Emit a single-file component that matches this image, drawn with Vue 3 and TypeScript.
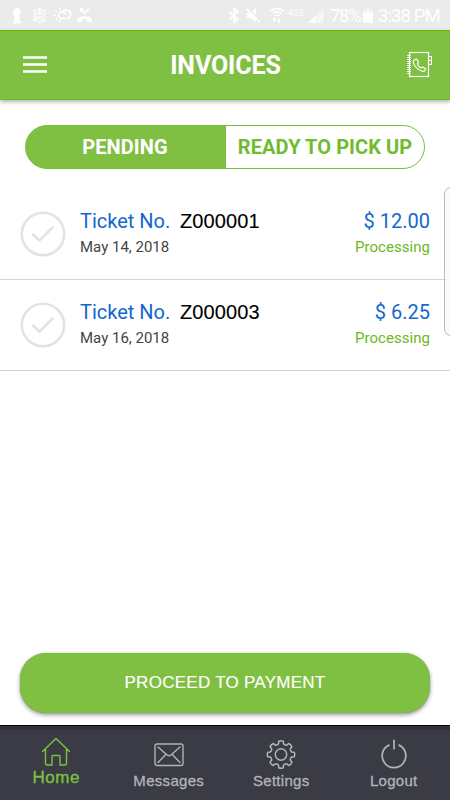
<script setup lang="ts">
interface Ticket { no: string; date: string; amount: string; status: string }

const tickets: Ticket[] = [
  { no: 'Z000001', date: 'May 14, 2018', amount: '$ 12.00', status: 'Processing' },
  { no: 'Z000003', date: 'May 16, 2018', amount: '$ 6.25', status: 'Processing' },
]

// Outline of the eight-toothed settings gear, centred on 15,15
function gearPath(): string {
  const at = (r: number, deg: number): string => {
    const a = (deg * Math.PI) / 180
    return `${(15 + r * Math.cos(a)).toFixed(2)} ${(15 + r * Math.sin(a)).toFixed(2)}`
  }
  let d = ''
  for (let i = 0; i < 8; i++) {
    const c = i * 45 - 90
    d += `${i === 0 ? 'M' : 'L'}${at(11, c - 13)}L${at(13.4, c - 10)}Q${at(14.2, c)} ${at(13.4, c + 10)}L${at(11, c + 13)}Q${at(9.8, c + 22.5)} ${at(11, c + 32)}`
  }
  return d + 'Z'
}
const gear = gearPath()
</script>

<template>
  <div class="screen">
    <div class="status">
      <svg class="status-icons" width="100" height="30" viewBox="0 0 100 30" fill="none" stroke="#fff">
        <path d="M13 23.500V21.500L14.500 20.500V15.500L13 14V12.500H12.800A4.200 4.200 0 1 1 21.200 12.500L19.500 14.500V20.500L21.200 21.500V23.500Z" fill="#fff" stroke="none" />
        <path d="M34 10.200Q36.500 11.300 39.500 8.500Q42.500 11.300 45 10.200Q44 12 45 14.500V20.500Q42.500 21 39.500 22.700Q36.500 21 34 20.500V14.500Q35 12 34 10.200Z" stroke-width="1.100" />
        <path d="M34.500 14.300H44.500M36.500 12.300H42.500M39.500 10V14" stroke-width="1" />
        <text x="35" y="20.300" font-size="6" font-weight="700" textLength="9" lengthAdjust="spacingAndGlyphs" fill="#fff" stroke="none">NFL</text>
        <path d="M62 18.500H66.300A4.200 4.200 0 1 0 62.400 13M62 18.500A3.400 3.400 0 1 1 64.300 12.600L66 14.500" stroke-width="1.700" />
        <path d="M53.500 15.500H55.800M55.500 10.500L57 12M55.500 20L57 18.600M60 8.500V10.300M60 20.300V22" stroke-width="1.700" />
        <path d="M80.500 9L84.500 13L89 9M80.500 12V9H83.500" stroke-width="1.700" />
        <path d="M77 20.800Q77 18 80 17Q84.500 15.300 89.500 17Q92 18 92 20.800V22H87.300V19.200Q84.500 18.400 81.700 19.200V22H77Z" fill="#fff" stroke="none" />
      </svg>
      <svg class="status-icons" width="110" height="30" viewBox="220 0 110 30" fill="none" stroke="#fff">
        <path d="M229.500 12L238 19.500L234 22.500V8.500L238 11.500L229.500 19.500" stroke-width="1.800" />
        <path d="M247 13H250L256 8.500V22L250 18H247Z" fill="#fff" stroke="none" />
        <path d="M248.200 8L261.200 21.300" stroke="#ebebeb" stroke-width="1.500" />
        <path d="M246.500 9L260 22.300" stroke-width="1.500" />
        <path d="M270.500 11.200Q277 5.600 283.500 11.200M272.500 13.600Q277 9.700 281.500 13.600M274.500 16Q277 14 279.500 16" stroke-width="1.600" />
        <path d="M274.500 22V18.500M273 20L274.500 18L276 20M279 18.500V22M277.500 20.500L279 22.500L280.500 20.500" stroke-width="1.300" />
        <path d="M308 23L323.500 8.500V23Z" fill="#f5f5f5" stroke="none" />
        <path d="M308 23L315 16.500V23Z" fill="#fff" stroke="none" />
        <text x="287.500" y="16" font-size="8.500" font-weight="700" textLength="17" lengthAdjust="spacingAndGlyphs" fill="#f8f8f8" stroke="none">4GE</text>
      </svg>
      <span class="percent">78%</span>
      <svg class="battery" width="10" height="16" viewBox="0 0 10 16">
        <path d="M3 0H7V1.500H10V5H0V1.500H3Z" fill="#f4f4f4" /><path d="M0 4.500H10V15H0Z" fill="#fff" />
      </svg>
      <span class="clock">3:38 PM</span>
    </div>

    <header class="header">
      <svg width="24" height="18" viewBox="0 0 24 18">
        <path d="M0 1.500H24M0 8.500H24M0 15.500H24" stroke="#fff" stroke-width="2.600" />
      </svg>
      <h1>INVOICES</h1>
      <svg width="26" height="28" viewBox="0 0 26 28" fill="none" stroke="#fff">
        <rect x="2.500" y="1.500" width="19" height="24" stroke-width="1.200" />
        <path d="M2 4V24" stroke-width="3.600" stroke-dasharray="1 1" />
        <path d="M21.500 5.500H24.500V13.500H21.500M21.500 9.500H24.500" />
        <path d="M6.800 9.500L8.300 8.200Q9.500 7.700 10.300 9L11.400 11Q11.600 12.200 10.300 13.100Q11.600 15.700 14.200 17Q15.200 15.800 16.300 16.300L18.300 17.500Q19 18.300 17.900 19.500Q16.500 21 14.500 20Q8.500 17.200 6.600 12.600Q5.700 10.600 6.800 9.500Z" stroke-width="1.150" />
      </svg>
    </header>

    <main class="body">
      <div class="tabs">
        <button class="tab active"><span>PENDING</span></button>
        <button class="tab"><span>READY TO PICK UP</span></button>
      </div>

      <ul class="list">
        <li v-for="t in tickets" :key="t.no" class="ticket">
          <svg class="check" width="46" height="46" viewBox="0 0 46 46" fill="none" stroke="#e3e3e3">
            <circle cx="23" cy="23" r="21.200" stroke-width="2.600" />
            <path d="M13 23.500L19.500 29.500L32.500 16.500" stroke-width="2.500" stroke-linecap="round" />
          </svg>
          <div class="info">
            <div class="line"><span class="label">Ticket No.</span><span class="number">{{ t.no }}</span></div>
            <div class="date">{{ t.date }}</div>
          </div>
          <div class="money">
            <div class="line amount">{{ t.amount }}</div>
            <div class="state">{{ t.status }}</div>
          </div>
        </li>
      </ul>
      <div class="edge-handle"></div>
      <button class="pay"><span>PROCEED TO PAYMENT</span></button>
    </main>

    <nav class="nav">
      <a class="item current">
        <svg width="30" height="30" viewBox="0 0 30 30" fill="none" stroke="#7dc242" stroke-width="1.400" stroke-linejoin="round" stroke-linecap="round">
          <path d="M1.500 14.500L15 1.500L28.500 14.500M4.500 12V26.500Q4.500 28 6 28H11V19.500Q11 18.500 12 18.500H18Q19 18.500 19 19.500V28H24Q25.500 28 25.500 26.500V12" />
        </svg>
        <span>Home</span>
      </a>
      <a class="item">
        <svg width="30" height="30" viewBox="0 0 30 30" fill="none" stroke="#b3b4b8" stroke-width="1.400">
          <rect x="1" y="5" width="28" height="21.500" rx="2" />
          <path d="M4 8L12.800 15.800Q15 17.700 17.200 15.800L26 8M4 23.500L12 15.200M26 23.500L18 15.200" stroke-linecap="round" />
        </svg>
        <span>Messages</span>
      </a>
      <a class="item">
        <svg width="30" height="30" viewBox="0 -.5 30 30" fill="none" stroke="#b3b4b8" stroke-width="1.500" stroke-linejoin="round">
          <path :d="gear" /><circle cx="15" cy="15" r="5.700" />
        </svg>
        <span>Settings</span>
      </a>
      <a class="item">
        <svg width="30" height="30" viewBox="0 0 30 30" fill="none" stroke="#b3b4b8" stroke-width="1.700">
          <path d="M10.500 5.900A11.800 11.800 0 1 0 19.500 5.900M15 .8V10.500" />
        </svg>
        <span>Logout</span>
      </a>
    </nav>
  </div>
</template>

<style>
body { margin: 0; }
</style>

<style scoped>
.screen { width: 450px; height: 800px; display: flex; flex-direction: column; background: #fff; font-family: Roboto, sans-serif; overflow: hidden; }
button { border: 0; padding: 0; background: none; font-family: inherit; }
span { white-space: nowrap; }
.status { height: 30px; flex: none; display: flex; align-items: center; background: #ebebeb; color: #fff; }
.status-icons { flex: none; }
.status-icons + .status-icons { margin-left: 120px; }
.percent { width: 30px; flex: none; line-height: 31px; padding-top: 2px; font-size: 18.500px; letter-spacing: -1.400px; }
.battery { margin: 2px 0 0 3px; flex: none; }
.clock { margin-left: 5px; line-height: 31px; padding-top: 2px; font-size: 18.500px; letter-spacing: -.9px; }
.header { height: 70px; flex: none; box-sizing: border-box; border-top: 1px solid #65b800; border-bottom: 1px solid #6cbd20; padding: 0 17px 0 23px; display: flex; align-items: center; justify-content: space-between; background: #7fc043; box-shadow: 0 2px 4px rgba(0,0,0,.3); }
h1 { margin: 2px 3px 0 0; color: #fff; font-size: 25px; font-weight: 700; letter-spacing: -.1px; line-height: 30px; }
.body { flex: 1; position: relative; display: flex; flex-direction: column; }
.tabs { height: 44px; box-sizing: border-box; margin: 25px 25px 0; display: flex; border: 1px solid #79bf3b; border-radius: 22px; overflow: hidden; background: linear-gradient(90deg, #7fc043 50%, #fff 50%) border-box; }
.tab { width: 198px; color: #72ba2f; font-weight: 700; font-size: 20px; letter-spacing: .06px; display: flex; align-items: center; justify-content: center; }
.tab.active { width: 200px; background: #7fc043; color: #fff; padding-right: 2px; box-sizing: border-box; }
.list { list-style: none; margin: 20px 0 0; padding: 0; }
.ticket { height: 91px; box-sizing: border-box; border-bottom: 1px solid #d4d4d4; padding: 0 20px; display: flex; }
.check { margin-top: 21.500px; flex: none; }
.info { margin: 19px 0 0 14px; flex: 1; }
.line { height: 26px; line-height: 26px; font-size: 20px; color: #1268cf; display: flex; }
.label { width: 100px; }
.number { color: #000; font-family: "Liberation Sans", sans-serif; letter-spacing: .12px; -webkit-text-stroke: .12px #000; }
.date { color: #444; font-size: 15px; line-height: 27px; }
.money { margin-top: 19px; text-align: right; }
.amount { justify-content: flex-end; }
.state { color: #6bb823; font-size: 15px; line-height: 27px; letter-spacing: .05px; }
.edge-handle { position: absolute; right: -8px; top: 87px; width: 14px; height: 149px; box-sizing: border-box; border: 1px solid #bbb; border-radius: 8px; background: rgba(250,250,250,.75); }
.pay { height: 60px; margin: auto 20px 12px; border-radius: 26px; background: #7fc043; color: #fff; box-shadow: 0 2px 4px rgba(0,0,0,.4), 0 0 1px rgba(0,0,0,.35); font: 17px "Liberation Sans", sans-serif; letter-spacing: .27px; -webkit-text-stroke: .15px #fff; }
.nav { height: 75px; flex: none; box-sizing: border-box; border-top: 1px solid #000; display: grid; grid-template-columns: repeat(4, 1fr); background: linear-gradient(#31313b 0 4px, #3a3b45 4px); color: #b3b4b8; font-family: "Liberation Sans", sans-serif; }
.item { display: flex; flex-direction: column; align-items: center; padding-top: 13px; font-size: 15px; letter-spacing: .3px; -webkit-text-stroke: .3px currentColor; }
.item span { line-height: 20px; margin-top: 2px; }
.item.current { color: #7dc242; font-size: 17px; padding-top: 11px; letter-spacing: .5px; }
.item.current span { margin-top: 1px; }
</style>
